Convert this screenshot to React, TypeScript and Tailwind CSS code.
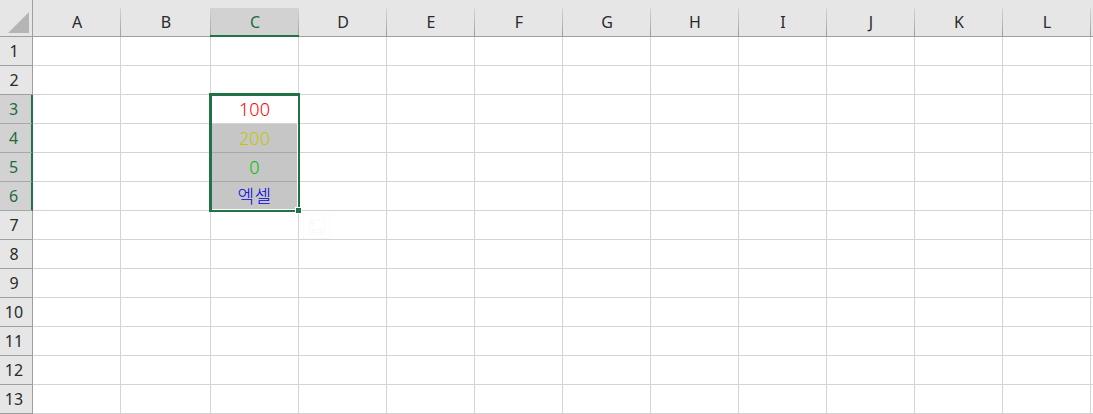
import React from 'react';

const columns = ['A', 'B', 'C', 'D', 'E', 'F', 'G', 'H', 'I', 'J', 'K', 'L'];
const rows = [1, 2, 3, 4, 5, 6, 7, 8, 9, 10, 11, 12, 13];

const values: Record<number, { text: string; style: string }> = {
  3: { text: '100', style: 'text-[#ff0000] text-[18px] font-light' },
  4: { text: '200', style: 'text-[#c4c400] text-[18px] font-light' },
  5: { text: '0', style: 'text-[#00c000] text-[18px] font-light' },
  6: { text: '엑셀', style: 'text-[#0000e0] text-[18px] font-light tracking-[0.5px]' },
};

function ColumnHeader({ name }: { name: string }) {
  const active = name === 'C';
  return (
    <div className="h-[37px] pt-2 bg-[#e6e6e6] border-b border-[#9f9f9f]">
      <div className={`h-full flex ${active ? 'bg-[#d2d2d2]' : ''}`}>
        <div className={`flex-1 flex items-center justify-center pl-px ${active ? 'text-[#1f6b41]' : 'text-[#2a2a2a]'}`}>
          {name}
        </div>
        <div className="w-px bg-gradient-to-b from-[#d4d4d4] to-[#a0a0a0]" />
      </div>
    </div>
  );
}

function RowHeader({ row }: { row: number }) {
  const active = row >= 3 && row <= 6;
  return (
    <div
      className={`h-[29px] flex items-center justify-center pr-1 border-b ${
        active
          ? 'bg-[#d2d2d2] text-[#1f6b41] border-[#a8a8a8] border-r-2 border-r-[#217346]'
          : 'bg-[#e6e6e6] text-[#2a2a2a] border-[#9f9f9f] border-r border-r-[#9f9f9f]'
      }`}
    >
      {row}
    </div>
  );
}

function Cell({ row, col }: { row: number; col: string }) {
  const value = col === 'C' ? values[row] : undefined;
  const filled = col === 'C' && row >= 4 && row <= 6;
  return (
    <div
      className={`h-[29px] flex items-center justify-center pt-px border-r border-b ${
        filled ? 'bg-[#c6c6c6] border-[#a8a8a8]' : 'bg-white border-[#d4d4d4]'
      } ${value ? value.style : ''}`}
    >
      {value?.text}
    </div>
  );
}

export default function App() {
  return (
    <div className="relative w-[1093px] h-[414px] overflow-hidden bg-white text-[16px] font-['Noto_Sans','Noto_Sans_CJK_KR',sans-serif]">
      <div className="grid grid-cols-[33px_88px_90px_repeat(10,88px)_2px]">
        {/* Corner */}
        <div className="relative h-[37px] bg-[#e6e6e6] border-r border-b border-[#9f9f9f]">
          <svg className="absolute left-0 top-0" width="32" height="36" viewBox="0 0 32 36">
            <polygon points="8,33 29,12 29,33" fill="#b5b5b5" />
          </svg>
        </div>
        {columns.map((c) => (
          <ColumnHeader key={c} name={c} />
        ))}
        <div className="h-[37px] bg-[#e6e6e6] border-b border-[#9f9f9f]" />

        {rows.map((r) => (
          <React.Fragment key={r}>
            <RowHeader row={r} />
            {columns.map((c) => (
              <Cell key={c} row={r} col={c} />
            ))}
            <div className="h-[29px] border-b border-[#d4d4d4]" />
          </React.Fragment>
        ))}
      </div>

      {/* Active column strip under the C header */}
      <div className="absolute left-[210px] top-[35px] w-[89px] h-[2px] bg-[#217346]" />

      {/* Selection box */}
      <div className="absolute left-[209px] top-[93px] w-[91px] h-[119px] border-l-[3px] border-t-[3px] border-r-2 border-b-2 border-[#217346]">
        <div className="absolute inset-0 border-r border-b border-white" />
      </div>
      <div className="absolute left-[296px] top-[208px] w-[5px] h-[5px] bg-[#217346] outline outline-1 outline-white" />

      {/* Quick analysis button, barely visible */}
      <svg className="absolute left-[303px] top-[214px]" width="27" height="25" viewBox="0 0 27 25" fill="none">
        <rect x="0.5" y="0.5" width="26" height="24" fill="#ffffff" stroke="#fbfbfb" />
        <path d="M6.5 6.5h15v14h-15z" stroke="#fafafa" />
        <path d="M9.5 15.5h9v3h-9z" stroke="#f8f8f8" />
        <path d="M9 4l-3 6h3l-1 4 4-6h-3z" fill="#fdf9ee" />
      </svg>
    </div>
  );
}
